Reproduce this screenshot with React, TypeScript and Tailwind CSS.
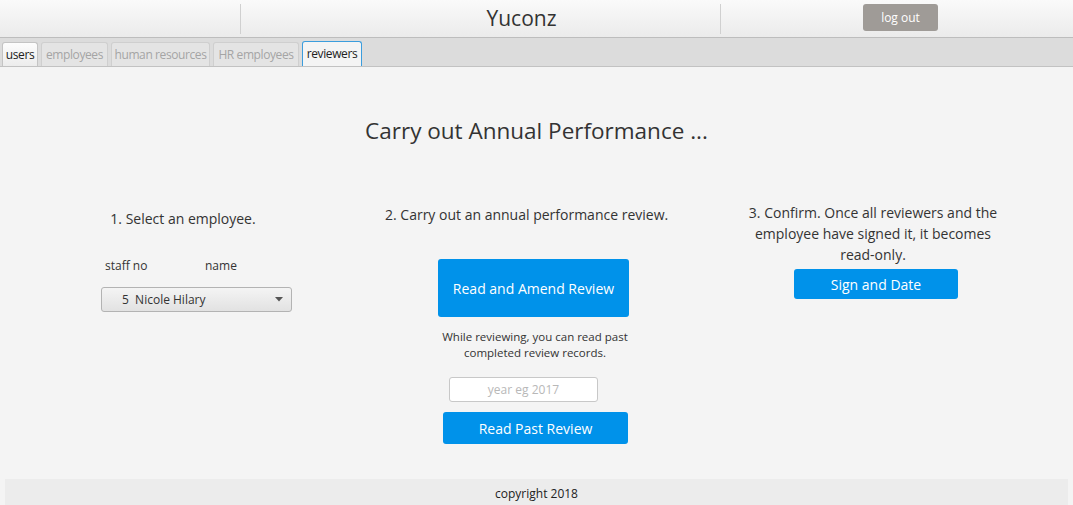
import React from "react";

const font = { fontFamily: '"Open Sans", "Noto Sans", sans-serif' };

function Tab({ label, kind, w }: { label: string; kind: "first" | "normal" | "selected"; w: string }) {
  if (kind === "selected") {
    return (
      <div className={`${w} h-[25px] flex items-center justify-center whitespace-nowrap text-[12px] tracking-[-0.4px] text-[#222] bg-[#f4f4f4] border border-b-0 border-[#3b9ddd] rounded-t-[3px] mr-[3px]`}>
        {label}
      </div>
    );
  }
  if (kind === "first") {
    return (
      <div className={`${w} h-[24px] flex items-center justify-center whitespace-nowrap text-[12px] tracking-[-0.4px] text-[#222] bg-gradient-to-b from-[#fdfdfd] to-[#ececec] border border-b-0 border-[#c4c4c4] rounded-t-[3px] mr-[3px]`}>
        {label}
      </div>
    );
  }
  return (
    <div className={`${w} h-[24px] flex items-center justify-center whitespace-nowrap text-[12px] tracking-[-0.4px] text-[#a5a5a5] bg-[#e4e4e4] border border-b-0 border-[#cfcfcf] rounded-t-[3px] mr-[3px]`}>
      {label}
    </div>
  );
}

export default function App() {
  return (
    <div style={font} className="w-[1073px] h-[505px] bg-[#f4f4f4] flex flex-col text-[#333] overflow-hidden">
      {/* header */}
      <div className="h-[38px] flex items-center bg-gradient-to-b from-[#fafafa] to-[#ebebeb] border-b border-[#bdbdbd]">
        <div className="w-[241px] h-[30px] border-r border-[#d0d0d0]" />
        <div className="w-[479px] flex justify-center pl-[82px] text-[21px] text-[#333] leading-none pb-[1px]">Yuconz</div>
        <div className="w-[1px] h-[30px] bg-[#d0d0d0]" />
        <div className="flex-1 flex">
          <div className="ml-[142px] w-[75px] h-[27px] rounded-[3px] bg-[#9f9b97] text-white text-[12px] flex items-center justify-center mt-[-2px]">
            log out
          </div>
        </div>
      </div>
      {/* tabs */}
      <div className="h-[29px] bg-[#dcdcdc] border-b border-[#c2c2c2] flex items-end pl-[2px]">
        <Tab label="users" kind="first" w="w-[36px]" />
        <Tab label="employees" kind="normal" w="w-[67px]" />
        <Tab label="human resources" kind="normal" w="w-[99px]" />
        <Tab label="HR employees" kind="normal" w="w-[86px]" />
        <Tab label="reviewers" kind="selected" w="w-[60px]" />
      </div>
      {/* content */}
      <div className="flex-1 flex flex-col">
        <div className="mt-[49px] text-center text-[22.5px] leading-[30px] text-[#333]">Carry out Annual Performance ...</div>
        <div className="flex mt-[48px]">
          {/* col1 */}
          <div className="w-[366px] flex flex-col">
            <div className="text-center text-[14px] leading-[20px] mt-[15px]">1. Select an employee.</div>
            <div className="flex text-[12px] leading-[16px] mt-[29px] pl-[105px]">
              <span className="w-[100px]">staff no</span>
              <span>name</span>
            </div>
            <div className="ml-[101px] mt-[13px] w-[191px] h-[25px] rounded-[3px] border border-[#b3b3b3] bg-gradient-to-b from-[#f4f4f4] to-[#e2e2e2] flex items-center pl-[20px] pr-[8px] text-[12px] text-[#333]">
              <span className="flex-1">5&nbsp;&nbsp;Nicole Hilary</span>
              <svg width="8" height="5" viewBox="0 0 8 5"><path d="M0 0 L8 0 L4 4.5 Z" fill="#555" /></svg>
            </div>
          </div>
          {/* col2 */}
          <div className="w-[338px] flex flex-col">
            <div className="ml-[19px] text-[14px] leading-[20px] mt-[11px] whitespace-nowrap">2. Carry out an annual performance review.</div>
            <div className="ml-[72px] mt-[34px] w-[191px] h-[58px] rounded-[3px] bg-[#0092ea] text-white text-[14px] flex items-center justify-center">
              Read and Amend Review
            </div>
            <div className="mt-[12px] text-center text-[11.5px] leading-[16px] text-[#333]">
              While reviewing, you can read past
              <br />
              completed review records.
            </div>
            <div className="ml-[83px] mt-[16px] w-[149px] h-[25px] bg-white border border-[#c8c8c8] rounded-[3px] flex items-center justify-center text-[12px] text-[#b8b8b8]">
              year eg 2017
            </div>
            <div className="ml-[77px] mt-[10px] w-[185px] h-[32px] rounded-[3px] bg-[#0092ea] text-white text-[14px] flex items-center justify-center">
              Read Past Review
            </div>
          </div>
          {/* col3 */}
          <div className="w-[338px] flex flex-col items-center">
            <div className="text-center text-[14px] leading-[21px] mt-[8px]">
              3. Confirm. Once all reviewers and the
              <br />
              employee have signed it, it becomes
              <br />
              read-only.
            </div>
            <div className="mt-[4px] ml-[6px] w-[164px] h-[30px] rounded-[3px] bg-[#0092ea] text-white text-[14px] flex items-center justify-center">
              Sign and Date
            </div>
          </div>
        </div>
        <div className="flex-1" />
        <div className="mx-[5px] h-[26px] bg-[#ececec] flex items-center justify-center pt-[3px] text-[12px] text-[#222]">
          copyright 2018
        </div>
      </div>
    </div>
  );
}
